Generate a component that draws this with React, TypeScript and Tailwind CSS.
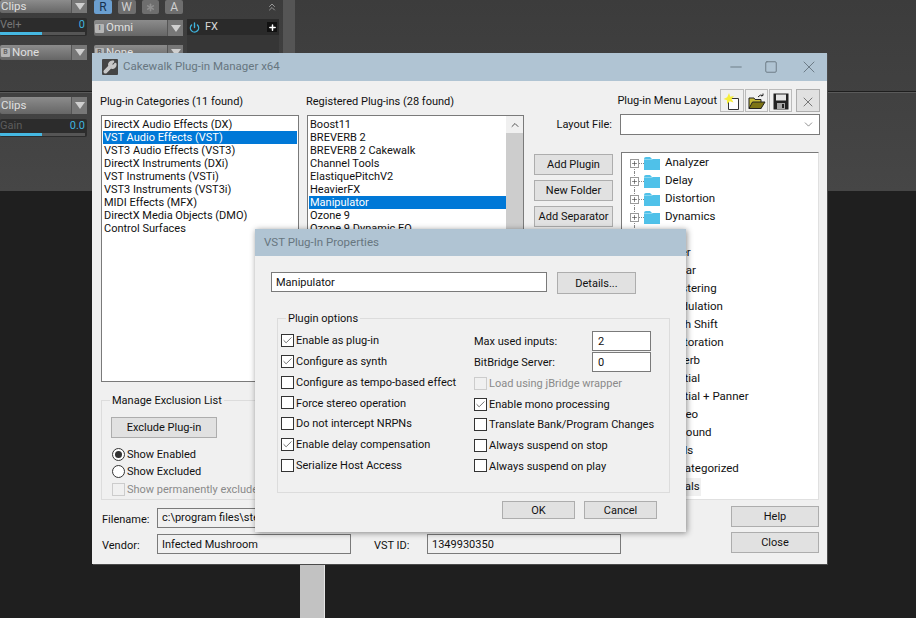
import type { ReactNode } from "react";
import { Asterisk, Check, ChevronDown, ChevronsUp, Power, Plus, Wrench, X, Minus, Square } from "lucide-react";

const categories = [
  "DirectX Audio Effects (DX)",
  "VST Audio Effects (VST)",
  "VST3 Audio Effects (VST3)",
  "DirectX Instruments (DXi)",
  "VST Instruments (VSTi)",
  "VST3 Instruments (VST3i)",
  "MIDI Effects (MFX)",
  "DirectX Media Objects (DMO)",
  "Control Surfaces",
];

const plugins = [
  "Boost11",
  "BREVERB 2",
  "BREVERB 2 Cakewalk",
  "Channel Tools",
  "ElastiquePitchV2",
  "HeavierFX",
  "Manipulator",
  "Ozone 9",
  "Ozone 9 Dynamic EQ",
];

const folders = [
  "Analyzer",
  "Delay",
  "Distortion",
  "Dynamics",
  "EQ",
  "Filter",
  "Guitar",
  "Mastering",
  "Modulation",
  "Pitch Shift",
  "Restoration",
  "Reverb",
  "Spatial",
  "Spatial + Panner",
  "Stereo",
  "Surround",
  "Tools",
  "Uncategorized",
  "Vocals",
];

function DawSelect({ label, badge, className = "" }: { label: string; badge?: string; className?: string }) {
  return (
    <div className={`flex items-stretch rounded-[2px] bg-gradient-to-b from-[#8c8c8c] to-[#666] text-[11.5px] leading-none text-[#e0e0e0] ${className}`}>
      <div className="flex flex-1 items-center gap-[2px] overflow-hidden pl-[1px]">
        {badge && <span className="flex h-[9px] w-[9px] items-center justify-center rounded-[1px] bg-[#b5b5b5] text-[7px] font-bold leading-none text-[#666]">{badge}</span>}
        <span>{label}</span>
      </div>
      <div className="flex w-[16px] items-center justify-center border-l border-[#555] bg-[#777]">
        <div className="h-0 w-0 border-x-[5px] border-t-[7px] border-x-transparent border-t-[#cfcfcf]" />
      </div>
    </div>
  );
}

function DawReadout({ label, value, dim }: { label: string; value: string; dim?: boolean }) {
  return (
    <div className="h-[18px] overflow-hidden rounded-[2px] bg-[#2c2c2c] pr-[2px] text-[11px] leading-[14px]">
      <div className="flex justify-between">
        <span className={dim ? "text-[#5c5c5c]" : "text-[#777]"}>{label}</span>
        <span className="text-[#3fb4de]">{value}</span>
      </div>
      <div className="h-[3px] bg-[#555]">
        <div className="h-[3px] w-[42px] bg-[#45b8e2]" />
      </div>
    </div>
  );
}

function DawButton({ children, active }: { children: ReactNode; active?: boolean }) {
  return (
    <div className={`flex h-[14px] w-[18px] items-center justify-center rounded-[2px] text-[12px] leading-none ${active ? "bg-[#6b9fd0] text-[#17324d]" : "bg-[#6e6e6e] text-[#d0d0d0]"}`}>
      {children}
    </div>
  );
}

function Background() {
  return (
    <div className="flex h-[618px] w-[916px] flex-col overflow-hidden bg-[#1f1f1f]">
      <div className="relative flex h-[191px] shrink-0 bg-gradient-to-b from-[#3c3c3c] to-[#464646]">
        <div className="absolute left-0 top-[91px] h-[2px] w-full border-b border-[#5a5a5a] bg-[#1e1e1e]" />
        <div className="relative flex w-[87px] shrink-0 flex-col">
          <DawSelect label="Clips" className="h-[13px]" />
          <div className="mt-[5px]"><DawReadout label="Vel+" value="0" /></div>
          <DawSelect label="None" badge="B" className="mt-[9px] h-[15px]" />
          <DawSelect label="Clips" className="mt-[37px] h-[17px]" />
          <div className="mt-[5px]"><DawReadout label="Gain" value="0.0" dim /></div>
        </div>
        <div className="ml-[7px] flex w-[89px] shrink-0 flex-col">
          <div className="flex gap-[6px]">
            <DawButton active>R</DawButton>
            <DawButton>W</DawButton>
            <DawButton><Asterisk size={13} strokeWidth={3} className="text-[#8f8f8f]" /></DawButton>
            <DawButton>A</DawButton>
          </div>
          <DawSelect label="Omni" badge="I" className="mt-[6px] h-[16px]" />
          <DawSelect label="None" badge="B" className="mt-[9px] h-[15px]" />
        </div>
        <div className="ml-[4px] flex w-[92px] shrink-0 flex-col">
          <div className="flex h-[19px] justify-end pr-[1px] pt-[1px]">
            <ChevronsUp size={12} strokeWidth={2} className="text-[#999]" />
          </div>
          <div className="flex h-[16px] items-center bg-[#2a2a2a] px-[2px] text-[11px] text-[#d8d8d8]">
            <Power size={11} strokeWidth={3} className="text-[#3fb4de]" />
            <span className="ml-[5px] flex-1">FX</span>
            <span className="flex h-[10px] w-[10px] items-center justify-center bg-[#111]">
              <Plus size={9} strokeWidth={4} className="text-white" />
            </span>
          </div>
          <div className="flex-1 bg-[#363636]" />
        </div>
        <div className="ml-[4px] w-[12px] shrink-0 bg-[#555]" />
      </div>
      <div className="ml-[300px] -mt-[191px] h-[618px] w-[25px] border-r border-[#e4e4e4] bg-[#c2c2c2] pt-[18px] text-center text-[10px] leading-[17px] text-[#222]">
        <div className="border-t border-[#ddd]">120</div>
        <div className="border-t border-[#ddd]">96</div>
      </div>
    </div>
  );
}

function WinButton({ children, className = "" }: { children: ReactNode; className?: string }) {
  return (
    <div className={`flex items-center justify-center whitespace-nowrap border border-[#adadad] bg-[#e1e1e1] text-[#111] ${className}`}>
      <span className="flex translate-y-px">{children}</span>
    </div>
  );
}

function CheckRow({ label, checked, disabled }: { label: string; checked?: boolean; disabled?: boolean }) {
  return (
    <div className={`flex h-[13px] items-center gap-[2px] ${disabled ? "text-[#8a8a8a]" : ""}`}>
      <span className={`flex h-[13px] w-[13px] shrink-0 items-center justify-center border ${disabled ? "border-[#ccc] bg-[#f0f0f0]" : "border-[#333] bg-white"}`}>
        {checked && <Check size={11} strokeWidth={1.5} className="text-[#333]" />}
      </span>
      <span className="translate-y-px whitespace-nowrap">{label}</span>
    </div>
  );
}

function Radio({ label, checked }: { label: string; checked?: boolean }) {
  return (
    <div className="flex h-[17px] items-center gap-[2px]">
      <span className="flex h-[13px] w-[13px] items-center justify-center rounded-full border border-[#333] bg-white">
        {checked && <span className="h-[7px] w-[7px] rounded-full bg-[#333]" />}
      </span>
      <span className="translate-y-px">{label}</span>
    </div>
  );
}

function TreeRow({ name, first, last }: { name: string; first?: boolean; last?: boolean }) {
  return (
    <div className="relative flex h-[18px] items-center">
      {!last && <span className={`absolute bottom-0 left-[4px] border-l border-dotted border-[#888] ${first ? "top-[9px]" : "top-0"}`} />}
      <span className="relative flex h-[9px] w-[9px] shrink-0 items-center justify-center border border-[#9a9a9a] bg-white text-[#333]">
        <Plus size={7} strokeWidth={2} />
      </span>
      <span className="w-[5px] border-t border-dotted border-[#888]" />
      <svg width="16" height="13" viewBox="0 0 16 13" className="shrink-0">
        <path d="M0 2 Q0 0 2 0 H6 L8 2 H16 V13 H0 Z" fill="#4fc1e9" />
        <path d="M0 3 H8 L9 2 H0 Z" fill="#8bd6f0" />
      </svg>
      <span className={`ml-[5px] pr-[1px] text-[11.5px] ${last ? "bg-[#f0f0f0]" : ""}`}>{name}</span>
    </div>
  );
}

function NewIcon() {
  return (
    <svg width="18" height="18" viewBox="0 0 18 18">
      <path d="M5.5 5.5 H15.5 V16.5 H5.5 Z" fill="#fff" stroke="#333" />
      <path d="M6 0 L7.3 3.7 L11 3 L8.6 6 L10.5 9.5 L6.8 8.2 L4 11 L4 7.2 L0.5 6 L4.2 4.2 Z" fill="#f6ee3a" />
    </svg>
  );
}

function OpenIcon() {
  return (
    <svg width="18" height="18" viewBox="0 0 18 18">
      <path d="M1 5 H6 L7 6.5 H13 V15.5 H1 Z" fill="#c9bd3b" stroke="#222" />
      <path d="M1 15.5 L4.5 9 H17 L13 15.5 Z" fill="#7d7415" stroke="#222" />
      <path d="M10 4 Q12 1 15 2.5 M15 2.5 L15 0.5 M15 2.5 L13 3" fill="none" stroke="#222" />
    </svg>
  );
}

function SaveIcon() {
  return (
    <svg width="16" height="17" viewBox="0 0 16 17">
      <path d="M0.5 0.5 H15.5 V16.5 H0.5 Z" fill="#222" />
      <rect x="3" y="1.5" width="10" height="6" fill="#e6e6e6" />
      <rect x="4" y="10" width="8" height="6" fill="#a6a6a6" />
      <rect x="9" y="11" width="2" height="4" fill="#222" />
    </svg>
  );
}

function ManagerWindow() {
  return (
    <div className="absolute left-[92px] top-[53px] flex h-[511px] w-[735px] flex-col bg-[#f0f0f0] text-[#111] shadow-[1px_1px_0_#4a4a4a]">
      <div className="flex h-[28px] shrink-0 items-center bg-[#b0c4d3] pl-[10px]">
        <span className="flex h-[16px] w-[16px] items-center justify-center rounded-[1px] bg-[#444]">
          <Wrench size={14} strokeWidth={2.5} fill="currentColor" className="text-[#c8c8c8]" />
        </span>
        <span className="ml-[5px] flex-1 text-[11.5px] text-[#67767f]">Cakewalk Plug-in Manager x64</span>
        <Minus size={18} strokeWidth={1.3} className="text-[#6d7c87]" />
        <Square size={14} strokeWidth={1.7} className="ml-[19px] text-[#6d7c87]" />
        <X size={20} strokeWidth={1.2} className="ml-[21px] mr-[8px] text-[#6d7c87]" />
      </div>

      <div className="flex h-[425px] shrink-0 pl-[9px] pt-[13px]">
        <div className="w-[198px] shrink-0">
          <div className="-ml-[1px] h-[21px] leading-[16px]">Plug-in Categories (11 found)</div>
          <div className="h-[267px] border border-[#7a7a7a] bg-white pl-[1px] pt-[2px]">
            {categories.map((c, i) => (
              <div key={c} className={`h-[13px] whitespace-nowrap pl-[1px] leading-[13px] ${i === 1 ? "mr-[1px] bg-[#0078d7] text-white" : ""}`}>{c}</div>
            ))}
          </div>
          <fieldset className="mt-[11px] h-[107px] border border-[#dcdcdc] px-[9px]">
            <legend className="ml-[-1px] px-[2px] leading-[14px]"><span className="inline-block translate-y-px">Manage Exclusion List</span></legend>
            <WinButton className="mt-[10px] h-[21px] w-[106px]">Exclude Plug-in</WinButton>
            <div className="mt-[8px] pl-[1px]">
              <Radio label="Show Enabled" checked />
              <Radio label="Show Excluded" />
              <div className="mt-[3px]"><CheckRow label="Show permanently excluded" disabled /></div>
            </div>
          </fieldset>
        </div>

        <div className="ml-[8px] w-[217px] shrink-0">
          <div className="-ml-[1px] h-[21px] leading-[16px]">Registered Plug-ins (28 found)</div>
          <div className="flex h-[267px] border border-[#7a7a7a] bg-white">
            <div className="flex-1 pl-[1px] pt-[2px]">
              {plugins.map((p, i) => (
                <div key={p} className={`h-[13px] whitespace-nowrap pl-[1px] leading-[13px] ${i === 6 ? "bg-[#0078d7] text-white" : ""}`}>{p}</div>
              ))}
            </div>
            <div className="w-[17px] bg-[#f0f0f0]">
              <div className="flex h-[17px] items-center justify-center text-[#555]">
                <ChevronDown size={12} strokeWidth={2} className="rotate-180" />
              </div>
              <div className="h-[110px] bg-[#cdcdcd]" />
            </div>
          </div>
        </div>

        <div className="ml-[10px] w-[79px] shrink-0 pt-[60px]">
          <WinButton className="h-[21px] w-[79px]">Add Plugin</WinButton>
          <WinButton className="mt-[5px] h-[21px] w-[79px]">New Folder</WinButton>
          <WinButton className="mt-[5px] h-[21px] w-[79px]">Add Separator</WinButton>
        </div>

        <div className="ml-[7px] flex w-[200px] shrink-0 flex-col">
          <div className="relative -mt-[5px] flex h-[23px] items-center justify-end">
            <span className="absolute right-[103px] translate-y-px whitespace-nowrap">Plug-in Menu Layout</span>
            <WinButton className="h-[23px] w-[24px] border-[#bbb] bg-[#f0f0f0]"><NewIcon /></WinButton>
            <WinButton className="ml-[1px] h-[23px] w-[23px] border-[#bbb] bg-[#f0f0f0]"><OpenIcon /></WinButton>
            <WinButton className="ml-[1px] h-[23px] w-[23px] border-[#bbb] bg-[#f0f0f0]"><SaveIcon /></WinButton>
            <WinButton className="ml-[4px] h-[23px] w-[24px]"><X size={16} strokeWidth={1.5} className="text-[#777]" /></WinButton>
          </div>
          <div className="relative mt-[2px] flex h-[21px] items-center justify-end border border-[#7a7a7a] bg-white pr-[4px]">
            <span className="absolute right-[207px] translate-y-px whitespace-nowrap">Layout File:</span>
            <ChevronDown size={13} strokeWidth={1} className="text-[#333]" />
          </div>
          <div className="ml-[1px] mt-[17px] h-[348px] w-[198px] border border-[#7a7a7a] border-b-[#e0e0e0] border-r-[#e0e0e0] bg-white pl-[8px] pt-[1px]">
            {folders.map((f, i) => (
              <TreeRow key={f} name={f} first={i === 0} last={i === folders.length - 1} />
            ))}
          </div>
        </div>
      </div>

      <div className="flex flex-1 justify-between pl-[10px] pr-[8px]">
        <div className="pt-[2px]">
          <div className="flex h-[20px] items-center">
            <span className="w-[55px] translate-y-[2px]">Filename:</span>
            <div className="h-[20px] w-[464px] overflow-hidden border border-[#7a7a7a] pl-[4px] leading-[17px]">c:\program files\steinberg\vstplugins\manipulator.dll</div>
          </div>
          <div className="mt-[6px] flex h-[20px] items-center">
            <span className="w-[55px] translate-y-[2px]">Vendor:</span>
            <div className="h-[20px] w-[194px] border border-[#7a7a7a] pl-[4px] leading-[19px]">Infected Mushroom</div>
            <span className="ml-[23px] w-[53px] translate-y-[2px]">VST ID:</span>
            <div className="h-[20px] w-[194px] border border-[#7a7a7a] pl-[4px] leading-[19px]">1349930350</div>
          </div>
        </div>
        <div>
          <WinButton className="h-[21px] w-[88px]">Help</WinButton>
          <WinButton className="mt-[5px] h-[21px] w-[88px]">Close</WinButton>
        </div>
      </div>
    </div>
  );
}

function PropertiesDialog() {
  return (
    <div className="absolute left-[255px] top-[229px] flex h-[303px] w-[431px] flex-col bg-[#f0f0f0] text-[#111] shadow-[1px_1px_6px_rgba(0,0,0,0.45)]">
      <div className="flex h-[27px] shrink-0 items-center bg-[#b0c4d3] pl-[9px] text-[11.5px] text-[#67767f]">VST Plug-In Properties</div>
      <div className="mt-[16px] flex items-start pl-[16px]">
        <div className="h-[20px] w-[276px] border border-[#7a7a7a] bg-white pl-[4px] leading-[20px]">Manipulator</div>
        <WinButton className="ml-[10px] h-[22px] w-[79px]">Details...</WinButton>
      </div>
      <fieldset className="ml-[22px] mt-[17px] h-[182px] w-[393px] border border-[#dcdcdc] pl-[3px]">
        <legend className="ml-[5px] px-[2px] leading-[14px]"><span className="inline-block translate-y-px">Plugin options</span></legend>
        <div className="flex">
          <div className="flex w-[193px] flex-col gap-[7.8px] pt-[9px]">
            <CheckRow label="Enable as plug-in" checked />
            <CheckRow label="Configure as synth" checked />
            <CheckRow label="Configure as tempo-based effect" />
            <CheckRow label="Force stereo operation" />
            <CheckRow label="Do not intercept NRPNs" />
            <CheckRow label="Enable delay compensation" checked />
            <CheckRow label="Serialize Host Access" />
          </div>
          <div className="flex-1 pt-[6px]">
            <div className="flex h-[20px] items-center">
              <span className="w-[118px] translate-y-px">Max used inputs:</span>
              <div className="h-[20px] w-[59px] border border-[#7a7a7a] bg-white pl-[5px] leading-[20px]">2</div>
            </div>
            <div className="mt-[1px] flex h-[20px] items-center">
              <span className="w-[118px] translate-y-px">BitBridge Server:</span>
              <div className="h-[20px] w-[59px] border border-[#7a7a7a] bg-white pl-[5px] leading-[20px]">0</div>
            </div>
            <div className="mt-[5px] flex flex-col gap-[7.6px]">
              <CheckRow label="Load using jBridge wrapper" disabled />
              <CheckRow label="Enable mono processing" checked />
              <CheckRow label="Translate Bank/Program Changes" />
              <CheckRow label="Always suspend on stop" />
              <CheckRow label="Always suspend on play" />
            </div>
          </div>
        </div>
      </fieldset>
      <div className="mt-[8px] flex justify-end gap-[9px] pr-[29px]">
        <WinButton className="h-[18px] w-[73px]">OK</WinButton>
        <WinButton className="h-[18px] w-[73px]">Cancel</WinButton>
      </div>
    </div>
  );
}

export default function App() {
  return (
    <div className="relative h-[618px] w-[916px] overflow-hidden font-['Roboto',sans-serif] text-[11px]">
      <Background />
      <ManagerWindow />
      <PropertiesDialog />
    </div>
  );
}
